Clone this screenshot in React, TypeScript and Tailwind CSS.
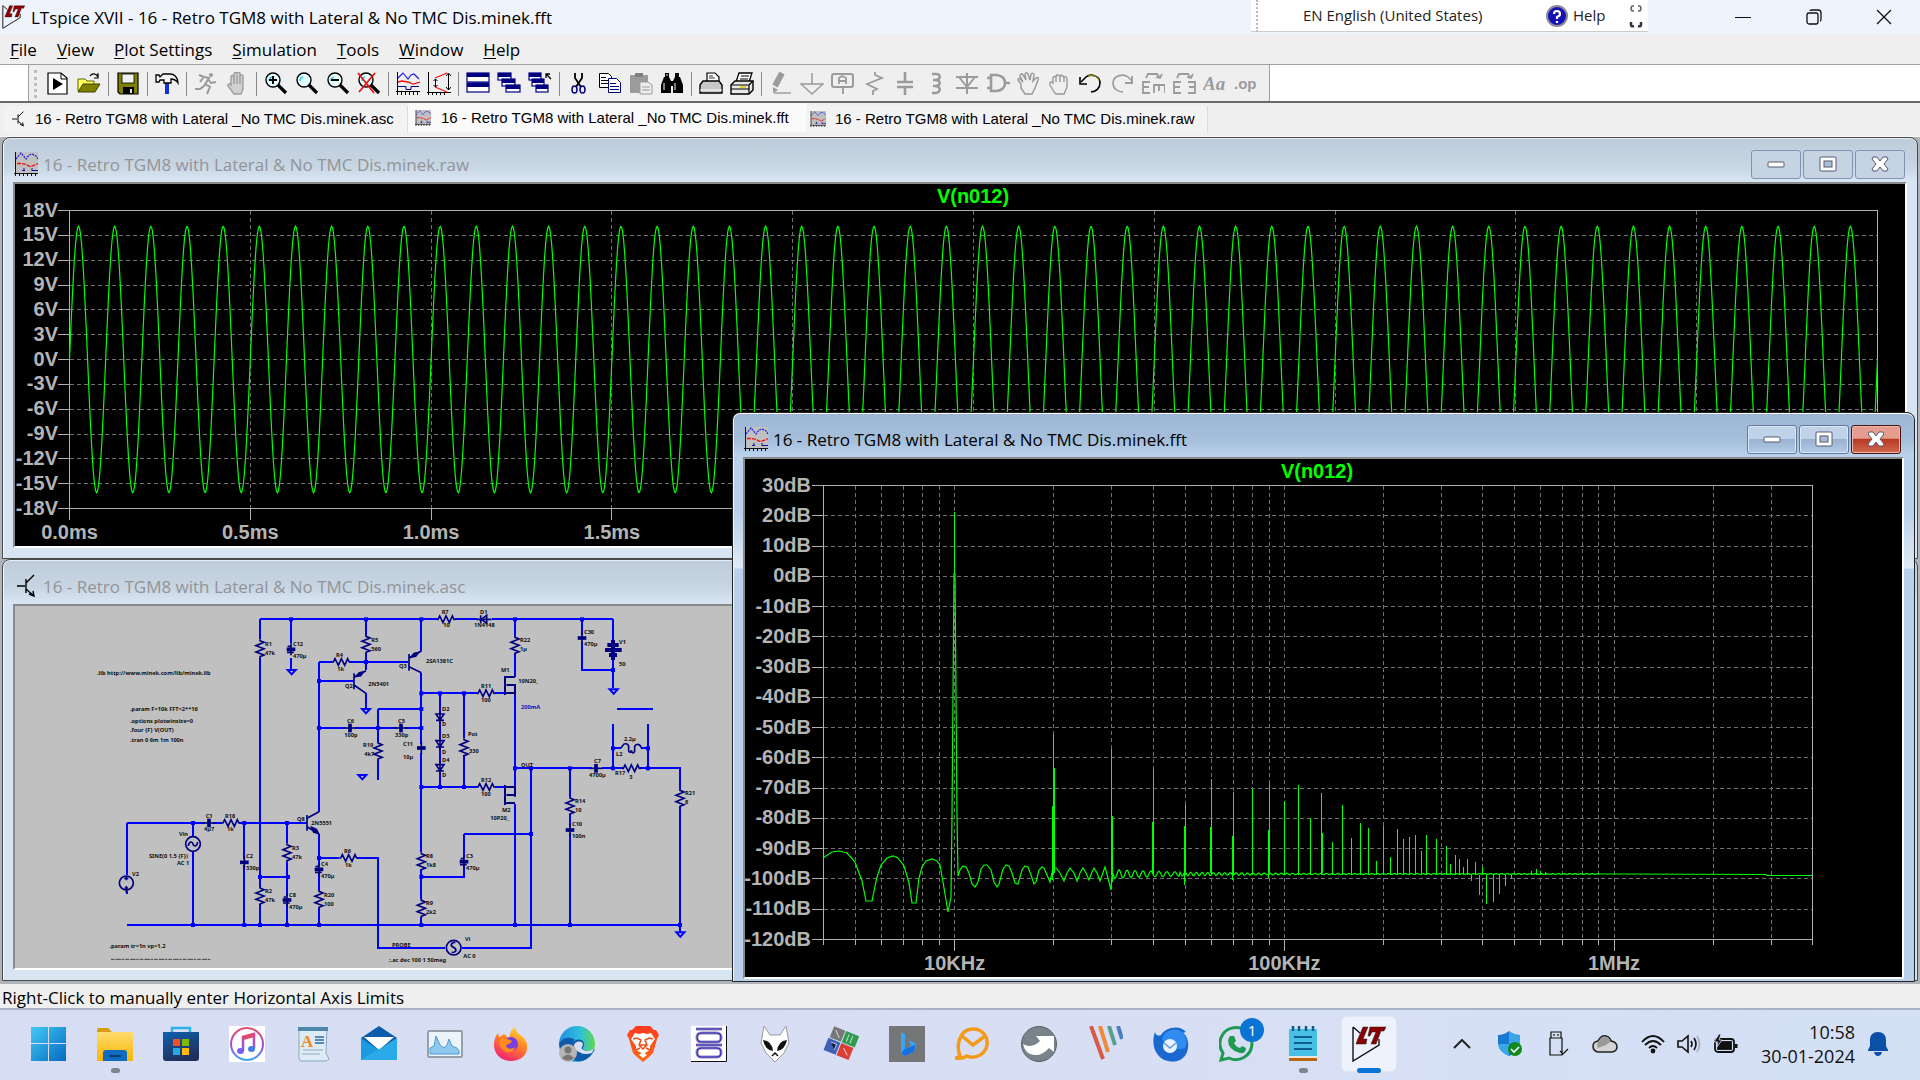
import React from "react";

const ui = "font-['Open_Sans','Noto_Sans',sans-serif]";
const arial = "font-['Liberation_Sans',Arial,sans-serif]";

/* ---------- small drawings ---------- */

function LtLogo({ className }: { className: string }) {
  return (
    <svg viewBox="0 0 34 36" className={className} aria-hidden="true">
      <path d="M1 1V35L27 19V13M1 1L8 7" fill="none" stroke="#111" strokeWidth="1.400" />
      <path d="M11 1h5l-5 12h4l-1 5H4l1-3zM18 1h16l-2 4h-3l-5 13h-5l5-12h-4l-2 4h-2z" fill="#8b0000" stroke="#222" strokeWidth=".5" />
    </svg>
  );
}

function PlotIcon({ className, bg = "none" }: { className: string; bg?: string }) {
  return (
    <svg viewBox="0 0 24 24" className={className} aria-hidden="true" fill="none">
      <rect x="1" width="23" height="21" fill={bg} />
      <path d="M1.500 0V24M0 21.500H24M5.500 21v3M9.500 21v3M13.500 21v3M17.500 21v3M21.500 21v3" stroke="#111" />
      <path d="M2 7L7 1l5 6 3-4 3-1 4 2 2 3" stroke="#1a1ae0" strokeWidth="1.200" strokeDasharray="2 1" />
      <path d="M3 11.500h4l5 1 4 2 4-1 4-2" stroke="#f01010" strokeWidth="1.300" strokeDasharray="4 1" />
      <path d="M8 18.500h3M10 16v3M18 16v3M18 18.500h6" stroke="#10109a" />
    </svg>
  );
}

function TransistorIcon({ className }: { className: string }) {
  return (
    <svg viewBox="0 0 20 24" className={className} aria-hidden="true" fill="none" stroke="#000" strokeWidth="1.400">
      <path d="M1 12H9M10 5V19M10 9L18 1M10 15l8 7M13 20l5 2-1-5" />
    </svg>
  );
}

const G = "#9b9b9b";
const N = "#000080";

function magnifier(inner: React.ReactNode) {
  return (
    <>
      <circle cx="9" cy="8" r="7" fill="#e8ffff" stroke="#000" strokeWidth="1.4" />
      <path d="M5 9a4 4 0 0 1 3-4" stroke="#30d0e0" strokeWidth="1.5" />
      <path d="M14 13l8 8" stroke="#000" strokeWidth="3.2" />
      {inner}
    </>
  );
}

function windowBox(x: number, y: number, w: number, h: number) {
  return (
    <>
      <rect x={x} y={y} width={w} height={h} fill="#fff" stroke={N} strokeWidth="1.2" />
      <path d={`M${x} ${y + 2}h${w}`} stroke={N} strokeWidth="4" />
    </>
  );
}

const tools: (null | { name: string; art: React.ReactNode })[] = [
  { name: "Run", art: <><path d="M2 1h13l6 5v16H2z" fill="#fff" stroke="#000" strokeWidth="1.2" /><path d="M15 1v6h6" stroke="#000" /><path d="M7 6v12l10-6z" fill="#000" /></> },
  { name: "Open", art: <><path d="M1 19V7h7l2 2h7v4" fill="#ffff60" stroke="#606000" /><path d="M1 20l5-8h17l-5 8z" fill="#808000" stroke="#404000" /><path d="M13 4c2-3 6-3 8 1M21 1v5h-4" stroke="#000" strokeWidth="1.2" /></> },
  null,
  { name: "Save", art: <><path d="M2 1h20v21H4l-2-2z" fill="#808000" stroke="#000" strokeWidth="1.2" /><rect x="6" y="2" width="12" height="9" fill="#f0f0f0" stroke="#000" strokeWidth=".8" /><rect x="7" y="15" width="11" height="7" fill="#000" /><rect x="14" y="17" width="2" height="4" fill="#ddd" /></> },
  null,
  { name: "Control Panel", art: <><path d="M12 9v13" stroke="#1030e0" strokeWidth="4" /><path d="M1 3h3l1 2 3-3h7c4 0 8 3 8 9-2-3-4-4-7-4v4H9V8H5l-1 2H1z" fill="#f4f4f4" stroke="#000" strokeWidth="1.3" /></> },
  null,
  { name: "Run simulation", art: <g stroke={G} strokeWidth="2"><circle cx="17" cy="3" r="2" fill={G} stroke="none" /><path d="M5 3l5 2 5 1-5 8-4 3-5 0M14 7l3 4 5-1M11 12l5 3-3 7M9 6L6 10" /></g> },
  { name: "Halt", art: <path d="M6 12V5c0-2 2-2 3 0V2c0-2 3-2 3 0V1c1-2 3-1 3 1v2c1-2 3-1 3 0v13l-2 5H9l-6-8c-1-2 1-3 3-1zM9 5v7M12 3v9M15 3v9" fill="#d0d0d0" stroke={G} strokeWidth="1.3" /> },
  null,
  { name: "Zoom in", art: magnifier(<path d="M5 8h8M9 4v8" stroke="#000" strokeWidth="2" />) },
  { name: "Pan", art: magnifier(null) },
  { name: "Zoom out", art: magnifier(<path d="M5 8h8" stroke="#000" strokeWidth="2" />) },
  { name: "Zoom to fit", art: magnifier(<path d="M1 1l16 20M18 1L2 20" stroke="#f01010" strokeWidth="1.8" />) },
  null,
  { name: "Autorange", art: <><path d="M1.500 0V23M0 19.500H24M5.500 19v4M9.500 19v4M13.500 19v4M17.500 19v4M21.500 19v4" stroke="#000" /><path d="M2 6l5-5 5 6 3-4 3-1 5 5" stroke="#1a1ae0" strokeWidth="1.1" /><path d="M2 10l4-1 6 1 5 2 7-2" stroke="#f01010" strokeWidth="1.3" /><path d="M2 14.500h8v3h5v-3h8" stroke={N} /></> },
  { name: "Setup axes", art: <><path d="M1.500 0V23M0 20.500H24M5.500 20v3M9.500 20v3M13.500 20v3M17.500 20v3M21.500 2v16M19 4l2.500-3L24 4M19 15l2.500 3 2.500-3" stroke="#000" /><path d="M20 1L8 6M8 15l12 5" stroke="#f01010" strokeWidth="1.2" /><path d="M8.500 7v8M6.500 9l2-2 2 2M6.500 13l2 2 2-2" stroke="#000" /></> },
  null,
  { name: "Tile", art: <>{windowBox(1, 1, 22, 9)}{windowBox(1, 11, 22, 9)}</> },
  { name: "Cascade", art: <>{windowBox(1, 1, 13, 7)}{windowBox(5, 7, 13, 7)}{windowBox(9, 13, 14, 7)}</> },
  { name: "Close all", art: <>{windowBox(1, 1, 12, 7)}{windowBox(4, 7, 12, 7)}{windowBox(8, 13, 12, 7)}<path d="M23 7l-5-5M18 6V2h4" stroke="#000" strokeWidth="1.3" /></> },
  null,
  { name: "Cut", art: <><path d="M8 1v5l6 9M15 1v5L9 15" stroke="#000" strokeWidth="1.8" /><ellipse cx="7.500" cy="17.500" rx="2.500" ry="3.500" stroke={N} strokeWidth="1.5" /><ellipse cx="15.500" cy="17.500" rx="2.500" ry="3.500" stroke={N} strokeWidth="1.5" /></> },
  { name: "Copy", art: <><path d="M1.500 1.500h9l3 3v11h-12z" fill="#fff" stroke="#000" /><path d="M3 5.500h5M3 8.500h7M3 11.500h7" stroke="#000" /><path d="M10.500 6.500h8l4 4v10h-12z" fill="#fff" stroke={N} /><path d="M12 11.500h6M12 14.500h9M12 17.500h9" stroke={N} /></> },
  { name: "Paste", art: <><path d="M1 3h18v18H1z" fill={G} /><path d="M6 1h8v4H6z" fill="#808080" /><path d="M11 10h8l4 3v9H11z" fill="#eee" stroke={G} /><path d="M13 15h8M13 18h8" stroke={G} /></> },
  { name: "Find", art: <><path d="M4 5h5l2 4v12H1v-8zM15 5h5l3 8v8H13V9z" fill="#000" /><path d="M5 1h4v4H5zM15 1h4v4h-4zM10 9h4v5h-4z" fill="#000" /><path d="M4 11v7M15 11v7M7 2v2" stroke="#fff" /></> },
  null,
  { name: "Print setup", art: <><path d="M8 9V1h8l4 4v4" fill="#fff" stroke="#000" strokeWidth="1.2" /><path d="M10 4h4M10 6h6" stroke="#000" strokeWidth=".8" /><path d="M4 9h16l3 4v8H1v-8z" fill="#c8c8c8" stroke="#000" strokeWidth="1.4" /><path d="M1 18h22" stroke="#fff" /></> },
  { name: "Print", art: <><path d="M6 10l3-9h13l-3 9" fill="#fff" stroke="#000" strokeWidth="1.3" /><path d="M11 4h8M10 7h8" stroke="#000" /><path d="M1 13l4-4h18v9l-4 4H1z" fill="#e8e8e8" stroke="#000" strokeWidth="1.4" /><path d="M1 13h18v9M19 13l4-4M1 17h18" stroke="#000" strokeWidth="1.2" /><path d="M10 15h6" stroke="#e0d000" strokeWidth="1.6" /></> },
  null,
  { name: "Wire", art: <><path d="M13 1L6 14" stroke={G} strokeWidth="6" /><path d="M4 15v6l5-3z" fill={G} /><path d="M5 21h17" stroke={G} strokeWidth="1.4" /></> },
  { name: "Ground", art: <path d="M12 1v11M1 12h22L12 22z" stroke={G} strokeWidth="1.5" /> },
  { name: "Label net", art: <><rect x="1" y="2" width="21" height="13" rx="2" stroke={G} strokeWidth="2" /><path d="M8 12V6l3-2 4 2v6M8 9h7M12 15v7" stroke={G} strokeWidth="1.8" /></> },
  { name: "Resistor", art: <path d="M13 0v3l7 3-15 6 10 5-4 2v4" stroke={G} strokeWidth="1.8" /> },
  { name: "Capacitor", art: <path d="M12 0v9M4 10h16M4 15h16M12 15v8" stroke={G} strokeWidth="2.600" /> },
  { name: "Inductor", art: <path d="M8 2h4c5 0 5 5 0 6H9h3c5 1 5 5 0 6H9h3c5 1 5 6 0 7H8" stroke={G} strokeWidth="2.400" /> },
  { name: "Diode", art: <path d="M1 5h22M4 5l8 10 8-10M1 16h22M12 1v21" stroke={G} strokeWidth="2" /> },
  { name: "Component", art: <path d="M5 3h6c6 1 8 4 8 8s-2 7-8 8H5zM1 6h4M1 16h4M19 11h5" stroke={G} strokeWidth="2.600" /> },
  { name: "Move", art: <path d="M4 12L1 8c0-2 2-2 3 0l2 2-3-6c0-2 2-3 3-1l3 5-1-6c1-2 3-1 3 0l2 6 1-6c1-1 3-1 3 1l-1 6 3-3c2-1 3 0 2 2l-3 8-3 6H8l-4-6z" stroke={G} strokeWidth="1.5" /> },
  { name: "Drag", art: <path d="M6 20l-4-7c-1-3 1-4 3-2V6c0-2 3-2 3 0V5c0-3 3-3 4 0 0-3 3-2 4 1 0-2 3-2 3 1v8l-3 7H8zM8 6v4M12 5v5M16 6v4" stroke={G} strokeWidth="1.4" /> },
  { name: "Undo", art: <><path d="M2 10l5-5c5-4 14-1 14 6 0 5-4 9-9 9" stroke="#000" strokeWidth="1.6" /><path d="M9 4c5-2 10 0 11 5" stroke="#a0a000" strokeWidth="1" /><path d="M1 5v7h7" stroke="#000" strokeWidth="1.600" /></> },
  { name: "Redo", art: <><path d="M22 9l-4-4C13 1 3 4 3 11c0 6 5 9 10 9" stroke={G} strokeWidth="1.6" /><path d="M22 4v7h-7" stroke={G} strokeWidth="1.8" /></> },
  { name: "Rotate", art: <path d="M9 10H2v11h7M2 15h6M13 21v-8h11v8M18 13v6M5 6l2-4h9l3 4M15 5l4 1 2-4" stroke={G} strokeWidth="1.8" /> },
  { name: "Mirror", art: <path d="M9 10H2v11h7M2 15h6M16 10h7v11h-7M17 15h6M5 6l2-4h9l3 4M15 5l4 1 2-4" stroke={G} strokeWidth="1.8" /> },
  { name: "Text", art: <text x="0" y="18" fontSize="19" fontWeight="bold" fontStyle="italic" fontFamily="Liberation Serif" fill={G}>Aa</text> },
  { name: "SPICE directive", art: <text x="0" y="17" fontSize="15" fontWeight="bold" fontFamily="Liberation Sans" fill={G}>.op</text> },
];

/* ---------- child windows ---------- */

function Frame(props: {
  place: string;
  title: string;
  icon: React.ReactNode;
  active?: boolean;
  client: string;
  children: React.ReactNode;
}) {
  const { active } = props;
  const glass = active
    ? "bg-[linear-gradient(#9bb5d3,#a6c0dc_28px,#b9d1ea_42px,#b9d1ea_100px,#dfeaf7_155px,#b9d1ea_156px)] border-[#222] shadow-[inset_0_1px_0_#fff,inset_1px_0_0_#eef5fc]"
    : "bg-[linear-gradient(#becbda,#c8d5e3_28px,#d7e4f2_42px)] border-[#4b4b4b] shadow-[inset_0_1px_0_#e6eef6,inset_1px_0_0_#f4f8fc]";
  const btn = active
    ? "border-[#62789c] bg-[linear-gradient(#bfd2e8_50%,#9ab3d2_50%,#b4cbe6)] shadow-[inset_0_0_0_1px_#dce8f5]"
    : "border-[#8392b4] bg-[#c5d3e2]";
  const close = active
    ? "border-[#4d1414] bg-[linear-gradient(#e59d90_45%,#b93a23_50%,#cf6a50)] shadow-[inset_0_0_0_1px_#eeb5ab]"
    : btn;
  const base = "flex h-[29px] w-[50px] items-center justify-center rounded-[3px] border";
  return (
    <section className={`absolute flex flex-col rounded-t-lg border ${glass} ${props.place}`}>
      <header className={`flex h-[44px] shrink-0 items-center pl-[11px] pt-2 ${active ? "pr-[13px]" : "pr-[12px]"} ${ui}`}>
        {props.icon}
        <h2 className={`ml-[5px] flex-1 pt-[2px] text-[17px] leading-6 ${active ? "text-black" : "text-[#929497]"}`}>{props.title}</h2>
        <div className="flex gap-[2px]">
          <button aria-label="Minimize" className={`${base} ${btn}`}>
            <svg viewBox="0 0 18 18" className="size-[18px]"><rect x="1" y="7" width="16" height="5" rx="1" fill="#fff" stroke="#545a6b" /></svg>
          </button>
          <button aria-label="Maximize" className={`${base} ${btn}`}>
            <svg viewBox="0 0 18 18" className="size-[18px]"><rect x="1" y="2" width="16" height="14" rx="1" fill="#fff" stroke="#545a6b" /><rect x="5" y="6" width="8" height="6" fill="#a9bdd6" stroke="#545a6b" /></svg>
          </button>
          <button aria-label="Close" className={`${base} ${close}`}>
            <svg viewBox="0 0 18 18" className="size-[18px]"><path d="M2 2h4l3 4 3-4h4l1 2-4 5 4 5-1 2h-4l-3-4-3 4H2l-1-2 4-5-4-5z" fill="#fff" stroke="#545a6b" /></svg>
          </button>
        </div>
      </header>
      <div className={`mx-[10px] min-h-0 flex-1 border-2 border-b-white border-l-[#8a8a8a] border-r-white border-t-[#8a8a8a] ${active ? "mb-[2px]" : "mb-[10px]"} ${props.client}`}>
        {props.children}
      </div>
    </section>
  );
}

const label = { fontFamily: "Liberation Sans, Arial, sans-serif", fontWeight: 700, fontSize: 20 };

function TransientPlot() {
  const left = 69.5, right = 1877.5, top = 210.5, bottom = 508.5;
  const perMs = (right - left) / 5;
  const volts = Array.from({ length: 13 }, (_, i) => 18 - 3 * i);
  const times = ["0.0ms", "0.5ms", "1.0ms", "1.5ms"];
  const yOf = (v: number) => top + ((18 - v) * (bottom - top)) / 36;
  let d = "";
  for (let i = 0; i <= 1808; i++) {
    const x = left + i;
    const y = yOf(16.1 * Math.sin((2 * Math.PI * 10 * i) / perMs));
    d += `${i ? "L" : "M"}${x.toFixed(1)} ${y.toFixed(1)}`;
  }
  return (
    <svg viewBox="15 184 1890 362" className="block h-full w-full" style={label}>
      <g stroke="#707070" strokeDasharray="4 3" shapeRendering="crispEdges">
        {volts.slice(1, -1).map((v) => <path key={v} d={`M${left} ${Math.floor(yOf(v)) + 0.5}H${right}`} />)}
        {Array.from({ length: 9 }, (_, i) => <path key={i} d={`M${Math.floor(left + ((i + 1) * perMs) / 2)}.5 ${top}V${bottom}`} />)}
      </g>
      <g stroke="#b0b0b0" fill="none" shapeRendering="crispEdges">
        <rect x={left} y={top} width={right - left} height={bottom - top} />
        {volts.map((v) => <path key={v} d={`M58 ${Math.floor(yOf(v)) + 0.5}H${left}`} />)}
        {Array.from({ length: 11 }, (_, i) => <path key={i} d={`M${Math.floor(left + (i * perMs) / 2)}.5 ${bottom}V520`} />)}
      </g>
      <path d={d} fill="none" stroke="#00ff00" strokeWidth="1.2" />
      <g fill="#b4b4b4">
        {volts.map((v) => <text key={v} x="58" y={yOf(v) + 6} textAnchor="end">{v}V</text>)}
        {times.map((t, i) => <text key={t} x={left + (i * perMs) / 2} y="539" textAnchor="middle">{t}</text>)}
      </g>
      <text x="973" y="203" textAnchor="middle" fill="#00ff00">V(n012)</text>
    </svg>
  );
}

/* lobes and ripple between harmonics, as [x, y] pairs */
const lobes = [
  [823, 858], [832, 852], [839, 851], [847, 853], [855, 862], [862, 881], [866, 901], [872, 901], [877, 877], [881, 865], [887, 858], [893, 856], [898, 858], [904, 866], [909, 883], [912, 903], [916, 903], [919, 878], [922, 867], [926, 861], [932, 859], [937, 861], [940, 865], [943, 882], [948, 912], [951, 897], [952, 817], [953, 694], [954, 573],
];
const ripple = [
  [955, 573], [956, 694], [957, 817], [958, 876], [960, 870], [963, 866], [966, 867], [969, 873], [972, 884], [975, 887], [978, 882], [981, 869], [984, 865], [987, 865], [991, 870], [994, 882], [997, 887], [999, 884], [1003, 869], [1006, 865], [1009, 866], [1012, 873], [1015, 883], [1018, 884], [1022, 870], [1025, 866], [1028, 867], [1031, 875], [1034, 884], [1036, 882], [1039, 870], [1042, 867], [1044, 868], [1047, 875], [1050, 882], [1053, 868], [1056, 868], [1060, 873], [1064, 881], [1067, 873], [1070, 868], [1074, 873], [1077, 881], [1080, 873], [1083, 868], [1086, 873], [1089, 880], [1092, 872], [1094, 868], [1097, 873], [1100, 881], [1105, 867], [1108, 878], [1111, 890], [1112, 875],
];
const peaks: [number, number][] = [
  [1, 512], [2, 734], [3, 749], [4, 769], [5, 805], [6, 779], [7, 792], [8, 789], [9, 783], [10, 801], [11, 785], [12, 818], [13, 793], [14, 842], [15, 805], [16, 838], [17, 823], [18, 828], [19, 861], [20, 826], [21, 857], [22, 829], [23, 839], [24, 837], [25, 835], [26, 851], [27, 835], [29, 839], [31, 846], [32, 864], [33, 855], [34, 859], [35, 867], [36, 859], [38, 862], [40, 867], [37, 881], [39, 895], [41, 904], [43, 902], [45, 894], [47, 886], [49, 879], [56, 871], [58, 869], [60, 871], [62, 872],
];

function SpectrumPlot() {
  const left = 823.5, right = 1812.5, top = 485.5, bottom = 939.5;
  const xOf = (khz: number) => left + ((right - left) / 3) * Math.log10(khz / 4);
  const snap = (n: number) => Math.floor(n) + 0.5;
  const grid = [5, 6, 7, 8, 9, 10, 20, 30, 40, 50, 60, 70, 80, 90, 100, 200, 300, 400, 500, 600, 700, 800, 900, 1000, 2000, 3000];
  const levels = Array.from({ length: 16 }, (_, i) => 30 - 10 * i);
  const yOf = (db: number) => top + ((30 - db) * (bottom - top)) / 150;
  let tail = "";
  for (let x = 1113; x <= 1620; x++) {
    const amp = 4.2 * Math.exp(-(x - 1113) / 75) + (x < 1600 ? 0.4 : 0);
    tail += `L${x} ${(874 + amp * Math.sin((x - 1113) / (x < 1180 ? 1.27 : 0.9))).toFixed(1)}`;
  }
  const d = "M" + lobes.map((p) => p.join(" ")).join("L");
  const e = "M" + ripple.map((p) => p.join(" ")).join("L") + tail + "L1766 874.5L1767 875.5H1812";
  return (
    <svg viewBox="745 459 1157 518" className="block h-full w-full" style={label}>
      <g stroke="#707070" strokeDasharray="4 3" shapeRendering="crispEdges">
        {levels.slice(1, -1).map((v) => <path key={v} d={`M${left} ${snap(yOf(v))}H${right}`} />)}
        {grid.map((f) => <path key={f} d={`M${snap(xOf(f))} ${top}V${bottom}`} />)}
      </g>
      <g stroke="#b0b0b0" fill="none" shapeRendering="crispEdges">
        <rect x={left} y={top} width={right - left} height={bottom - top} />
        {levels.map((v) => <path key={v} d={`M812 ${snap(yOf(v))}H${left}`} />)}
        {[4, ...grid, 4000].map((f) => <path key={f} d={`M${snap(xOf(f))} ${bottom}V${f === 10 || f === 100 || f === 1000 ? 951 : 945}`} />)}
      </g>
      <g fill="none" stroke="#00ff00">
        <path d={d} strokeWidth="1.2" />
        <path d={e} strokeWidth="1.2" />
        <g shapeRendering="crispEdges">
          {peaks.map(([n, y]) => <path key={n} d={`M${snap(xOf(n * 10))} ${n === 1 ? 573 : 875}V${y}`} />)}
          <path d="M1054.500 768V873M1052.500 806V880M1112.500 816V882M1152.500 822V873M1184.500 826V885M1210.500 827V873M1232.500 836V880M1268.500 830V878M1298.500 832V873M1322.500 833V873" />
        </g>
      </g>
      <g fill="#b4b4b4">
        {levels.map((v) => <text key={v} x="811" y={yOf(v) + 6} textAnchor="end">{v}dB</text>)}
        <text x={xOf(10)} y="970" textAnchor="middle">10KHz</text>
        <text x={xOf(100)} y="970" textAnchor="middle">100KHz</text>
        <text x={xOf(1000)} y="970" textAnchor="middle">1MHz</text>
      </g>
      <text x="1317" y="478" textAnchor="middle" fill="#00ff00">V(n012)</text>
    </svg>
  );
}

/* Schematic: three drawing units to a pixel */
const wires =
  "M780 118H1310M1366 118H1430M1475 118H1839M780 118V178M780 234V920M780 972V1035M873 118V190M873 235V268M1098 118V165M1098 220V270M957 246H996M1050 246H1225M957 246V695M957 303H1060M1098 340V385M957 444H1035M1065 444H1190M1216 444H1264M1134 387V485M1134 540V600M1134 387H1264M1264 118V213M1264 278V492M1264 518V817M1264 867V957M1264 1010V1035M1264 340H1430M1485 340H1515M1320 340V398M1320 425V478M1320 505V550M1320 578V621M1264 621H1430M1485 621H1515M1392 340V475M1392 525V621M1545 118V168M1545 218V290M1545 340V620M1545 672V1035M1545 565H1775M1805 565H1868M1920 565H2040V627M2040 680V1055M1593 565V1104H1386M1336 1104H1134V834H1072M1018 834H957M1710 565V650M1710 703V740M1710 760V1035M1392 762H1593M1392 762V835M1392 858V890H1264M1746 118V165M1746 185V270H1839M1839 118V185M1839 235V325M1851 387H1958M1839 432V565M1944 432V565M1839 505H1862M1925 505H1944M381 1035H2043M381 729H615M640 729H665M718 729H920M381 729V885M381 932V943M579 729V770M579 815V1035M733 729V838M733 856V1035M861 729V790M861 845V948M861 972V1035M780 891H864M957 762V858M957 880V930M957 985V1035";
const vRes = [[780, 178], [780, 920], [1098, 165], [1134, 485], [861, 790], [957, 930], [1264, 817], [1264, 957], [1392, 475], [1545, 168], [1710, 650], [2040, 627]];
const hRes = [[996, 246], [665, 729], [1018, 834], [1310, 118], [1430, 340], [1430, 621], [1866, 565]];
const vCap = [[873, 208, 1], [733, 847, 0], [861, 960, 1], [957, 868, 1], [1264, 504, 0], [1392, 845, 1], [1710, 750, 0], [1746, 174, 0]];
const hCap = [[627, 729], [1050, 444], [1203, 444], [1788, 565]];
const grounds = [[875, 270], [1098, 387], [1087, 585], [1841, 328], [2041, 1057]];
const nodes = [[873, 118], [1098, 118], [1264, 118], [1545, 118], [1746, 118], [1098, 246], [957, 303], [957, 444], [1134, 444], [1264, 387], [1264, 444], [1264, 340], [1320, 340], [1392, 340], [1320, 621], [1392, 621], [1264, 621], [1545, 565], [1593, 565], [1710, 565], [1839, 565], [1944, 565], [1944, 505], [1839, 505], [1839, 270], [1593, 762], [1264, 890], [957, 834], [579, 729], [733, 729], [861, 729], [864, 891], [780, 891], [579, 1035], [733, 1035], [780, 1035], [861, 1035], [957, 1035], [1264, 1035], [1545, 1035], [1710, 1035], [2040, 1035]];
const notes: [number, number, string][] = [
  [291, 284, ".lib http://www.minek.com/lib/minek.lib"], [390, 392, ".param F=10k FFT=2**16"], [390, 428, ".options plotwinsize=0"], [390, 456, ".four {F} V(OUT)"], [390, 485, ".tran 0 6m 1m 100n"],
  [795, 198, "R1"], [795, 224, "47k"], [879, 198, "C12"], [879, 233, "470µ"], [1114, 186, "R5"], [1114, 212, "560"], [1008, 231, "R4"], [1012, 273, "1k"], [1035, 323, "Q2"], [1105, 317, "2N5401"], [1041, 429, "C6"], [1033, 471, "100p"], [1089, 500, "R19"], [1093, 527, "4k7"],
  [617, 714, "C1"], [612, 753, "4µ7"], [675, 714, "R18"], [681, 753, "1k"], [537, 767, "Vin"], [447, 833, "SINE(0 1.5 {F})"], [531, 854, "AC 1"], [396, 887, "V2"], [738, 833, "C2"], [738, 869, "330p"], [876, 809, "R3"], [876, 836, "47k"], [795, 938, "R2"], [795, 965, "47k"], [867, 950, "C8"], [867, 986, "470µ"], [891, 722, "Q8"], [934, 734, "2N5551"], [963, 857, "C4"], [963, 893, "470µ"], [972, 950, "R20"], [972, 977, "100"], [1032, 818, "R6"], [1035, 860, "1k"],
  [328, 1103, ".param tr=1n vp=1.2"],
  [1325, 101, "R7"], [1330, 141, "10"], [1440, 101, "D1"], [1422, 141, "1N4148"], [1197, 263, "Q3"], [1278, 248, "2SA1381C"], [1560, 185, "R22"], [1560, 212, "1µ"], [1752, 161, "C30"], [1752, 197, "470µ"], [1857, 191, "V1"], [1857, 257, "50"], [1503, 275, "M1"], [1555, 308, "10N20_"], [1443, 323, "R11"], [1443, 366, "100"], [1326, 392, "D2"], [1326, 437, "D"], [1326, 473, "D3"], [1326, 521, "D"], [1326, 545, "D4"], [1326, 590, "D"], [1404, 467, "Pot"], [1407, 518, "330"], [1194, 428, "C5"], [1185, 471, "330p"], [1209, 497, "C11"], [1209, 536, "10µ"], [1443, 605, "R12"], [1443, 648, "100"], [1506, 695, "M2"], [1471, 719, "10P20_"], [1563, 560, "OUT"], [1782, 548, "C7"], [1767, 591, "4700µ"], [1872, 482, "2.2µ"], [1848, 527, "L2"], [1845, 584, "R17"], [1888, 597, "3"], [2055, 644, "R21"], [2055, 671, "8"], [1725, 668, "R14"], [1725, 695, "10"], [1716, 737, "C10"], [1716, 773, "100n"], [1278, 833, "R8"], [1278, 860, "1k8"], [1278, 974, "R9"], [1278, 1001, "2k2"], [1398, 833, "C3"], [1398, 869, "470µ"], [1395, 1082, "Vi"], [1390, 1133, "AC 0"], [1176, 1100, "PROBE"], [1167, 1145, ";.ac dec 100 1 50meg"],
];

function Schematic() {
  return (
    <svg viewBox="45 78 5670 1086" className="block h-full w-full">
      <path d={wires} fill="none" stroke="#0000ff" strokeWidth="6" shapeRendering="crispEdges" />
      <g fill="#0000ff">{nodes.map(([x, y], i) => <rect key={i} x={x - 6} y={y - 6} width="12" height="12" />)}</g>
      <g fill="none" stroke="#0000ff" strokeWidth="6">
        {grounds.map(([x, y], i) => <path key={i} d={`M${x - 12} ${y}h24l-12 13z`} />)}
      </g>
      <g fill="none" stroke={N} strokeWidth="5">
        {vRes.map(([x, y], i) => <path key={i} d={`M${x} ${y}v4l12 5-24 10 24 9-24 10 24 9-12 5v4`} />)}
        {hRes.map(([x, y], i) => <path key={i} d={`M${x} ${y}h4l5-10 10 20 9-20 10 20 9-20 5 10h4`} />)}
        {vCap.map(([x, y, e], i) => <g key={i}><path d={`M${x} ${y - 18}v36`} /><path d={`M${x - 13} ${y}h26`} strokeWidth="11" />{e ? <path d={`M${x - 12} ${y + 9}h20M${x - 10} ${y - 9}h9`} strokeWidth="5" /> : null}</g>)}
        {hCap.map(([x, y], i) => <g key={i}><path d={`M${x - 20} ${y}h40`} /><path d={`M${x} ${y - 13}v26`} strokeWidth="11" /></g>)}
        {[[1320, 412], [1320, 492], [1320, 564]].map(([x, y], i) => <path key={i} d={`M${x} ${y - 18}v36M${x - 12} ${y - 10}h24l-12 18zM${x - 12} ${y + 9}h24`} />)}
        <path d="M1430 118h45M1442 106v24M1460 106v24l-16-12z" />
        <path d="M1062 280V328M1062 292L1098 272M1062 315L1098 340M1227 222V272M1227 235L1264 213M1227 260L1264 278M921 705V752M921 715L957 695M921 740L957 762" />
        <path d="M1068 289L1078 278 1090 276 1082 287zM1233 231L1243 220 1255 218 1247 229zM935 742L941 756 955 760 949 748z" strokeWidth="5" fill={N} />
        <path d="M1515 288V345M1515 291H1545M1519 315H1545V345M1515 339H1545M1515 615V675M1515 621H1545V650M1519 645H1545M1515 669H1545" strokeWidth="6" />
        <path d="M1862 505l6-8c4-8 16-8 18 2v14c2 6 8 4 8-2 0 10 10 10 10 0v-12c3-8 14-8 18 0l4 8" />
        <circle cx="579" cy="792" r="22" /><path d="M565 798c2-16 12-14 14-6s12 10 14-6" />
        <circle cx="379" cy="909" r="21" /><path d="M373 895h12M374 924h10M379 889v12M379 918v20" />
        <circle cx="1361" cy="1103" r="22" /><path d="M1366 1087c-14 0-16 10-6 15s12 15-5 16" />
        <path d="M1822 195h34M1815 210h50M1827 225h24M1839 180v60" strokeWidth="12" />
      </g>
      <g fontFamily="Noto Sans, sans-serif" fontSize="17" fontWeight="700" fill="#101010">
        {notes.map(([x, y, t], i) => <text key={i} x={x} y={y}>{t}</text>)}
        <text x="1563" y="386" fill="#1010c0">200mA</text>
      </g>
      <path d="M333 1138H632" stroke="#444" strokeWidth="3" strokeDasharray="11 3 17 2 7 3" />
    </svg>
  );
}

/* ---------- task bar ---------- */

const apps: { name: string; open?: boolean; current?: boolean; art: React.ReactNode }[] = [
  { name: "Start", art: <g fill="url(#win)"><path d="M0 1h17v16H0zM18 1h17v16H18zM0 18h17v17H0zM18 18h17v17H18z" /></g> },
  { name: "File Explorer", open: true, art: <><path d="M0 4a2 2 0 0 1 2-2h9l4 4v5H0z" fill="#d99a10" /><rect y="6" width="36" height="29" rx="1" fill="url(#folder)" /><path d="M6 35v-8q0-3 3-3h18q3 0 3 3v8z" fill="#0f6cc0" /><path d="M12 30h12" stroke="#083e78" strokeWidth="2" /></> },
  { name: "Microsoft Store", art: <><path d="M9 6V2h18v4" fill="none" stroke="#28b4e8" strokeWidth="2.5" /><path d="M0 6h36v26a3 3 0 0 1-3 3H3a3 3 0 0 1-3-3z" fill="url(#store)" /><path d="M10 13h7v7h-7z" fill="#f25022" /><path d="M19 13h7v7h-7z" fill="#7fba00" /><path d="M10 22h7v7h-7z" fill="#28a8ea" /><path d="M19 22h7v7h-7z" fill="#ffb900" /></> },
  { name: "iTunes", art: <><rect width="36" height="36" fill="#fff" /><circle cx="18" cy="18" r="16" fill="#fff" stroke="url(#tunes)" strokeWidth="2" /><path d="M14 25V11l11-3v14" fill="none" stroke="url(#tunes)" strokeWidth="2.500" /><path d="M14 12l11-3" stroke="#e04a70" strokeWidth="4" /><ellipse cx="11.500" cy="25" rx="3.500" ry="3" fill="#7a5cf0" /><ellipse cx="22.500" cy="23" rx="3.500" ry="3" fill="#3f7fe8" /></> },
  { name: "WordPad", art: <><path d="M4 2h28l-1 25 3 6q-1 2-4 2H6q-3-1-2-8z" fill="#dcebf6" stroke="#8aa7bd" /><path d="M3 1h30v4H3z" fill="#4f87a8" /><text x="6" y="21" fontSize="17" fontWeight="bold" fontFamily="Liberation Serif" fill="#f08a20">A</text><path d="M20 11h9M20 14h9M20 17h9" stroke="#2d6aa8" strokeWidth="1.5" /><path d="M8 24h20M7 28h18" stroke="#9ab" strokeWidth="1.200" /></> },
  { name: "Mail", art: <><path d="M0 12L18 0l18 12v22H0z" fill="#0b5cab" /><path d="M3 11h30L18 24z" fill="#fff" /><path d="M0 12l18 12L36 12v22H0z" fill="#1b9ae0" /><path d="M0 34L36 12v22z" fill="#37b6f0" opacity=".6" /></> },
  { name: "Task Manager", art: <><rect x="1" y="5" width="34" height="26" rx="1" fill="#edf3fb" stroke="#96a0ad" strokeWidth="2" /><path d="M3 28v-6l4-2 2-10 4 9 4 3 3-3 2-6 3 7 5 2 2 3v3z" fill="#90c8ee" stroke="#4a9ad4" /></> },
  { name: "Firefox", art: <><path d="M18 35C8 35 1 28 1 19c0-5 2-10 4-12l1 4 5-3 5 4 2-7 4-4c1 6 6 8 9 11 2 3 4 6 3 11-1 8-8 12-16 12z" fill="url(#fox)" /><circle cx="18" cy="18" r="7" fill="#7a3fe0" /><path d="M7 13c6-3 8 1 12 2-1 3-5 3-6 5 2 4 7 3 9 1-1 6-8 7-12 3-4-3-4-8-3-11z" fill="#ff8a1e" /></> },
  { name: "Edge", art: <><circle cx="18" cy="18" r="18" fill="url(#edge)" /><path d="M13 20c0-7 10-9 12-3 1 3-2 4-1 6 3 3 8 2 12 0-4 9-11 13-19 12C8 33 2 28 0 18c3-7 12-8 16-4-2 1-3 3-3 6z" fill="#0c5aa8" /><path d="M15 20c0-5 8-6 9-2 0 2-2 3-1 5 4 3 8 2 12 0l-2 4c-6 2-10 1-13-1-3-1-5-3-5-6z" fill="#d7dff5" /><circle cx="9" cy="27" r="9" fill="#b5b5b5" /><circle cx="9" cy="24" r="3.500" fill="#777" /><path d="M3 32q6-7 12 0-6 5-12 0z" fill="#777" /></> },
  { name: "Brave", art: <><path d="M11 0h14l4 4h2l3 5-2 4-4 14-4 4-6 5-6-5-4-4-4-14-2-4 3-5h2z" fill="url(#brave)" /><path d="M10 7l4 1 4-1 4 1 4-1 4 6-5 7v4l-7 4-7-4v-4l-5-7z" fill="#fff" /><path d="M8 13l4-1 4 2-2 5 4 4 4-4-2-5 4-2 4 1M15 19h6M11 24l4-2M25 24l-4-2" stroke="#f04a12" strokeWidth="1.500" fill="none" /><path d="M14 29l4-3 4 3-4 3z" fill="#fff" /></> },
  { name: "Binary viewer", art: <><rect width="36" height="36" fill="#fff" /><path d="M35.500 0V35.500H0" fill="none" stroke="#111" /><g fill="none" stroke="#8f8bb8" strokeWidth="3"><rect x="6" y="7" width="24" height="9" rx="4" /><rect x="6" y="22" width="24" height="9" rx="4" /><path d="M5 3h26M5 19h26" /></g><g fill="none" stroke="#3020c0"><rect x="6" y="7" width="24" height="9" rx="4" /><rect x="6" y="22" width="24" height="9" rx="4" /><path d="M5 3h26M5 19h26" /></g></> },
  { name: "foobar2000", art: <><path d="M7 0l6 9h10l6-9 3 17-5 10-9 9-9-9-5-10z" fill="#fff" stroke="#999" /><path d="M6 14q9 1 10 11-8-1-10-11zM30 14q-9 1-10 11 8-1 10-11z" fill="#111" /><path d="M15 30l3-3 3 3" fill="none" stroke="#111" strokeWidth="1.500" /></> },
  { name: "Media tiles", art: <g transform="rotate(22 18 18)"><rect x="5" y="4" width="12" height="12" fill="#777" /><rect x="18" y="4" width="14" height="12" fill="#2f9a50" /><rect x="4" y="17" width="13" height="13" fill="#4060b8" /><rect x="18" y="17" width="13" height="13" fill="#d84035" /><path d="M8 7l6 6M22 6v8M26 6v8M8 20h6v6M22 21l6 5" stroke="#fff" opacity=".7" /></g> },
  { name: "Bing", art: <><rect width="36" height="36" fill="#747677" /><path d="M12 6l4 2v15l6-3-2-6 6 3q3 6-2 9l-8 4-4-3z" fill="#3aa4f2" /><path d="M16 23l10-4q1 4-2 7l-8 4-4-3z" fill="#1670e0" /></> },
  { name: "eM Client", art: <g fill="none" stroke="#f59a18" strokeWidth="3.500"><path d="M5 30c-4-10-1-27 13-27 10 0 15 8 14 16-2 11-14 14-20 11-3 2-6 3-11 2 3-1 4-2 4-2z" /><path d="M7 10l11 9 12-9" /></g> },
  { name: "Share", art: <><circle cx="18" cy="18" r="17.500" fill="#78838c" stroke="#596068" /><path d="M2 18q9 5 17-3l-4-5h18v16l-5-4q-7 8-15 7-9-1-11-11z" fill="#fff" /></> },
  { name: "Stripes", art: <g strokeWidth="4"><path d="M4 0l12 33" stroke="#d65a45" /><path d="M13 0l8 26" stroke="#f08a3a" /><path d="M22 0l6 19" stroke="#55a090" /><path d="M31 0l4 13" stroke="#4a7fc0" /></g> },
  { name: "Thunderbird", art: <><path d="M2 6c1 4 3 4 6 3C12 2 26-2 33 6l-3 1c6 4 6 14 4 19-3 8-11 11-19 9C4 33-3 20 2 6z" fill="#1a68d0" /><path d="M12 7q10-7 18 0 6 8 2 15-8 3-14-3-7-2-9-6z" fill="#2f8cf0" /><circle cx="17" cy="20" r="7" fill="#e8f2ff" /><path d="M11 17l6 5 6-5" stroke="#5a9ae8" strokeWidth="1.500" fill="none" /></> },
  { name: "WhatsApp", art: <><path d="M4 27A16 16 0 1 1 10 32L2 34z" fill="none" stroke="#1f9a52" strokeWidth="3" /><path d="M11 10l4 0 2 5-2 2q2 4 6 5l2-2 4 2q0 6-6 5-12-3-12-13z" fill="#1f9a52" /></> },
  { name: "Notepad", open: true, art: <><rect x="4" y="3" width="28" height="28" rx="1" fill="#48c0e4" /><path d="M8 0v5M14 0v5M21 0v5M28 0v5" stroke="#0d5a90" strokeWidth="2.500" /><path d="M9 11h18M9 17h18M9 23h18" stroke="#0f5c90" strokeWidth="2" /><path d="M4 31h28v4H4z" fill="#b8640c" /><path d="M4 30h28v2H4z" fill="#f2e6d8" /></> },
  { name: "LTspice XVII", open: true, current: true, art: null },
];

function Gradients() {
  return (
    <svg className="absolute size-0" aria-hidden="true">
      <defs>
        <linearGradient id="win" gradientUnits="userSpaceOnUse" x1="0" y1="0" x2="36" y2="36"><stop stopColor="#45cbf5" /><stop offset="1" stopColor="#0067c0" /></linearGradient>
        <linearGradient id="folder" x2="0" y2="1"><stop stopColor="#ffdc70" /><stop offset="1" stopColor="#f8b400" /></linearGradient>
        <linearGradient id="store" x2=".4" y2="1"><stop stopColor="#0f60b0" /><stop offset="1" stopColor="#20305c" /></linearGradient>
        <linearGradient id="tunes" gradientUnits="userSpaceOnUse" x1="18" y1="0" x2="18" y2="36"><stop stopColor="#f04a5c" /><stop offset=".6" stopColor="#9a50e8" /><stop offset="1" stopColor="#30b8f0" /></linearGradient>
        <linearGradient id="fox" x1=".8" y1="0" x2=".3" y2="1"><stop stopColor="#ffe030" /><stop offset=".5" stopColor="#ff7a28" /><stop offset="1" stopColor="#f0207a" /></linearGradient>
        <linearGradient id="edge" x2="1"><stop stopColor="#1d90e0" /><stop offset=".6" stopColor="#30c0d8" /><stop offset="1" stopColor="#60d850" /></linearGradient>
        <linearGradient id="brave" x2="0" y2="1"><stop stopColor="#ff3a20" /><stop offset="1" stopColor="#ff6a10" /></linearGradient>
      </defs>
    </svg>
  );
}

function TaskBar() {
  return (
    <footer className={`flex h-[70px] shrink-0 items-center bg-[linear-gradient(90deg,#d7def3,#d8dff4_60%,#d3e0f6)] pl-4 ${ui}`}>
      <Gradients />
      <nav aria-label="Task bar" className="flex items-center">
        {apps.map((a) => (
          <button key={a.name} aria-label={a.name} className="relative flex h-[70px] w-[66px] items-center justify-center pb-[2px]">
            {a.current ? (
              <span className="flex h-[56px] w-[56px] items-center justify-center rounded-md border border-[#dfe6f4] bg-[#edf2fc]">
                <LtLogo className="h-[36px] w-[34px]" />
              </span>
            ) : (
              <svg viewBox="0 0 36 36" className="size-[36px]" aria-hidden="true">{a.art}</svg>
            )}
            {a.open && <span className={`absolute bottom-[7px] h-[5px] rounded-full ${a.current ? "w-6 bg-[#0a74d4]" : "w-[9px] bg-[#7d858f]"}`} />}
            {a.name === "WhatsApp" && <span className="absolute right-[6px] top-[8px] flex size-6 items-center justify-center rounded-full bg-[#0a74d4] text-[15px] text-white">1</span>}
          </button>
        ))}
      </nav>
      <div className="ml-auto flex items-center pb-[2px] pr-8 text-[#111]">
        <button aria-label="Show hidden icons" className="mr-[27px]"><svg viewBox="0 0 18 10" className="h-[10px] w-[18px]" fill="none" stroke="#222" strokeWidth="2"><path d="M1 9l8-8 8 8" /></svg></button>
        <button aria-label="Windows Security" className="mr-[27px]">
          <svg viewBox="0 0 24 26" className="h-[26px] w-6"><path d="M11 0q5 4 11 4v9q-1 8-11 12Q1 21 0 13V4q6 0 11-4z" fill="#1878d4" /><path d="M11 0q5 4 11 4v9H11zM11 13v12Q1 21 0 13z" fill="#48b8f0" opacity=".7" /><circle cx="17" cy="18" r="7" fill="#0f8a1c" /><path d="M13 18l3 3 5-5" fill="none" stroke="#fff" strokeWidth="1.600" /></svg>
        </button>
        <button aria-label="Safely remove hardware" className="mr-[23px]">
          <svg viewBox="0 0 20 26" className="h-[26px] w-5" fill="none" stroke="#111" strokeWidth="1.200"><path d="M2 7V1h10v6M1 7h12v17H1zM5 3v2M9 3v2M11 20l3 3 5-5" /></svg>
        </button>
        <button aria-label="OneDrive" className="mr-[23px]">
          <svg viewBox="0 0 26 20" className="h-5 w-[26px]"><path d="M6 18q-5-1-5-6 0-4 5-5Q9 1 14 2q4 1 5 5 6 1 6 6 0 4-5 5z" fill="#d4d4d4" stroke="#222" strokeWidth="1.500" /><path d="M7 7q3-5 7-4 4 1 4 5l-4 3-8 3q-2-5 1-7z" fill="#9a9a9a" /></svg>
        </button>
        <button aria-label="Network, volume and battery" className="mr-[23px] flex items-center gap-[12px]">
          <svg viewBox="0 0 24 20" className="h-5 w-6" fill="none" stroke="#111" strokeWidth="1.800"><path d="M1 8q11-12 22 0M4 11q8-8 16 0M8 14q4-4 8 0" /><circle cx="12" cy="17" r="1.500" fill="#111" /></svg>
          <svg viewBox="0 0 24 20" className="h-5 w-6" fill="none" stroke="#111" strokeWidth="1.600"><path d="M1 7h4l6-5v16l-6-5H1zM14 7q2 3 0 6M17 4q4 6 0 12" /><path d="M20 2q5 8 0 16" stroke="#aab" /></svg>
          <svg viewBox="0 0 25 20" className="h-5 w-[25px]" fill="none" stroke="#111" strokeWidth="1.800"><rect x="2" y="5" width="19" height="13" rx="3" /><rect x="5" y="8" width="13" height="7" fill="#111" /><path d="M23 10v4" strokeWidth="3" /><path d="M6 0L1 8h4l-1 5 5-7H6l2-6z" fill="#111" stroke="#d5e0f5" strokeWidth=".8" /></svg>
        </button>
        <time className="text-right text-[18px] leading-6" dateTime="2024-01-30T10:58">10:58<br />30-01-2024</time>
        <button aria-label="Notifications" className="ml-[13px]">
          <svg viewBox="0 0 20 24" className="h-6 w-5" fill="#0a4fa8"><path d="M10 0c5 0 8 3 8 8v6l2 4v1H0v-1l2-4V8c0-5 3-8 8-8zM6 20h8q-1 4-4 4t-4-4z" /></svg>
        </button>
      </div>
    </footer>
  );
}

const menus = ["File", "View", "Plot Settings", "Simulation", "Tools", "Window", "Help"];

export default function App() {
  return (
    <div className={`flex h-screen flex-col overflow-hidden bg-[#efefef] text-black ${ui}`}>
      <header className="flex h-[34px] shrink-0 items-center bg-[#eff3fb]">
        <LtLogo className="ml-[2px] h-6 w-[23px]" />
        <h1 className="ml-[6px] pt-[2px] text-[17px] leading-6">LTspice XVII - 16 - Retro TGM8 with Lateral &amp; No TMC Dis.minek.fft</h1>
        <div className="ml-auto flex h-8 w-[397px] items-center self-start border-b border-[#ccc] bg-white text-[15px] text-[#222]">
          <span className="ml-[5px] h-8 border-l-2 border-dotted border-[#bbb]" />
          <button className="ml-[45px] w-[188px] whitespace-nowrap text-left">EN English (United States)</button>
          <button className="ml-[55px] flex items-center gap-[5px]">
            <svg viewBox="0 0 22 22" className="size-[22px]"><circle cx="11" cy="11" r="10" fill="#1414b4" stroke="#8a8a9a" strokeWidth="2" /><path d="M8 9q0-3 3-3t3 3q0 2-3 3v2M11 16v2" fill="none" stroke="#fff" strokeWidth="2.200" /></svg>
            Help
          </button>
          <svg viewBox="0 0 14 24" className="ml-[24px] h-6 w-[14px]" fill="none" stroke="#666" strokeWidth="1.500"><path d="M5 2H3q-2 2 0 5h2M9 2h2q2 2 0 5H9" /><path d="M2 18v3q0 2 3 1M12 18v3q0 2-3 1" stroke="#334" strokeWidth="2.500" /></svg>
        </div>
        <div className="flex w-[272px] items-center justify-between pl-[87px] pr-[28px]">
          <button aria-label="Minimize"><svg viewBox="0 0 16 16" className="size-4" stroke="#111"><path d="M0 8.500h16" /></svg></button>
          <button aria-label="Restore"><svg viewBox="0 0 16 16" className="size-4" fill="none" stroke="#111" strokeWidth="1.300"><rect x="1" y="4" width="11" height="11" rx="2" /><path d="M4 2q0-1 2-1h6q3 0 3 3v6q0 2-1 2" /></svg></button>
          <button aria-label="Close"><svg viewBox="0 0 16 16" className="size-4" stroke="#111" strokeWidth="1.300"><path d="M1 1l14 14M15 1L1 15" /></svg></button>
        </div>
      </header>

      <nav aria-label="Menu" className="flex h-[31px] shrink-0 items-center gap-[20px] border-b border-[#a0a0a0] pl-[10px] pt-[2px] text-[17px] leading-6">
        {menus.map((m) => (
          <button key={m}><span className="underline underline-offset-2">{m[0]}</span>{m.slice(1)}</button>
        ))}
      </nav>

      <div className="flex h-[38px] shrink-0 border-b-2 border-[#696969] bg-white">
        <div role="toolbar" className="ml-[28px] flex items-center border-x border-[#a0a0a0] bg-[#efefef] pr-[8px] pt-[1px]">
          <span className="ml-[5px] mr-[5px] h-7 border-l-[3px] border-dotted border-[#bdbdbd]" />
          {tools.map((t, i) =>
            t ? (
              <button key={t.name} aria-label={t.name} className="flex w-[31px] justify-center">
                <svg viewBox="0 0 24 24" className="size-6" fill="none">{t.art}</svg>
              </button>
            ) : (
              <span key={i} className="flex h-6 w-2 justify-center"><span className="w-px bg-[#8a8a8a]" /></span>
            ),
          )}
        </div>
      </div>

      <div role="tablist" className={`flex h-[34px] shrink-0 items-start whitespace-nowrap border-b border-[#fafafa] pl-1 text-[15px] leading-6 ${arial}`}>
        <button role="tab" className="mt-[3px] flex h-[26px] w-[404px] items-center border-r border-[#ddd] bg-[#f3f3f3] pl-[6px]"><TransistorIcon className="mr-[9px] size-4 shrink-0" />16 - Retro TGM8 with Lateral _No TMC Dis.minek.asc</button>
        <button role="tab" aria-selected="true" className="flex h-[29px] w-[398px] items-center bg-[#fafafa] pl-[7px]"><PlotIcon className="mr-[10px] size-4 shrink-0" bg="#c0c0c0" />16 - Retro TGM8 with Lateral _No TMC Dis.minek.fft</button>
        <button role="tab" className="mt-[3px] flex h-[26px] w-[402px] items-center border-r border-[#ddd] bg-[#f3f3f3] pl-[4px]"><PlotIcon className="mr-[9px] size-4 shrink-0" bg="#c0c0c0" />16 - Retro TGM8 with Lateral _No TMC Dis.minek.raw</button>
      </div>

      <main className="relative min-h-0 flex-1 overflow-hidden bg-[#b0b4ba]">
        <Frame place="left-[2px] right-[2px] top-0 h-[422px]" title="16 - Retro TGM8 with Lateral & No TMC Dis.minek.raw" icon={<PlotIcon className="size-6" bg="#c0c0c0" />} client="bg-black">
          <TransientPlot />
        </Frame>
        <Frame place="left-[2px] right-[2px] top-[422px] h-[422px]" title="16 - Retro TGM8 with Lateral & No TMC Dis.minek.asc" icon={<TransistorIcon className="h-6 w-6" />} client="bg-[#c0c0c0]">
          <Schematic />
        </Frame>
        <Frame active place="bottom-[2px] left-[732px] right-[5px] top-[275px]" title="16 - Retro TGM8 with Lateral & No TMC Dis.minek.fft" icon={<PlotIcon className="size-6" bg="#c0c0c0" />} client="bg-black">
          <SpectrumPlot />
        </Frame>
      </main>

      <div role="status" className="flex h-[26px] shrink-0 items-center border-b-2 border-[#a9b3c6] pl-[2px] pt-[3px] text-[17px] leading-6">
        Right-Click to manually enter Horizontal Axis Limits
      </div>
      <TaskBar />
    </div>
  );
}
